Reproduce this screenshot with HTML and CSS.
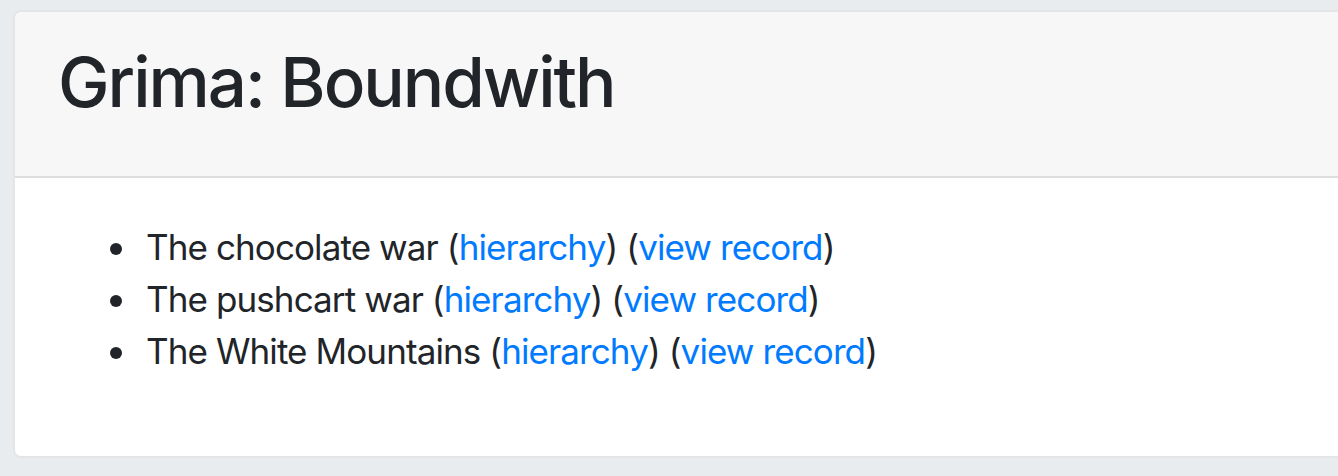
FILE: index.html
```html
<!DOCTYPE html>
<html lang="en">
<head>
  <meta charset="UTF-8">
  <title>Grima: Boundwith</title>
  <link rel="stylesheet" href="styles.css">
</head>
<body>
  <div class="card">
    <div class="card-header">
      <h1>Grima: Boundwith</h1>
    </div>
    <div class="card-body">
      <ul class="records">
        <li>The chocolate war (<a href="#">hierarchy</a>) (<a href="#">view record</a>)</li>
        <li>The pushcart war (<a href="#">hierarchy</a>) (<a href="#">view record</a>)</li>
        <li>The White Mountains (<a href="#">hierarchy</a>) (<a href="#">view record</a>)</li>
      </ul>
    </div>
  </div>
</body>
</html>
```

FILE: styles.css
```css
* {
  margin: 0;
  padding: 0;
  box-sizing: border-box;
}
html, body {
  overflow: hidden;
}
body {
  background-color: #e9ecef;
  font-family: Inter, "Noto Sans", sans-serif;
  color: #212529;
  padding: 10px 0 0 13px;
}
.card {
  width: 1400px;
  height: 448px;
  background-color: #fff;
  border: 2px solid rgba(0, 0, 0, 0.1);
  border-radius: 8px;
}
.card-header {
  background-color: #f7f7f7;
  border-bottom: 2px solid rgba(0, 0, 0, 0.1);
  border-radius: 6px 6px 0 0;
  padding: 28px 40px 52px 43px;
}
.card-header h1 {
  font-size: 69px;
  font-weight: 500;
  line-height: 84px;
  letter-spacing: -2px;
}
.card-body {
  padding: 43px 40px 40px;
}
.records {
  list-style: none;
  padding-left: 91px;
  font-size: 35px;
  line-height: 52px;
  letter-spacing: -0.9px;
}
.records li::before {
  content: "";
  display: inline-block;
  width: 12px;
  height: 12px;
  border-radius: 50%;
  background-color: #212529;
  margin-left: -36px;
  margin-right: 24px;
  vertical-align: 5px;
}
.records a {
  color: #007bff;
  text-decoration: none;
}
```
